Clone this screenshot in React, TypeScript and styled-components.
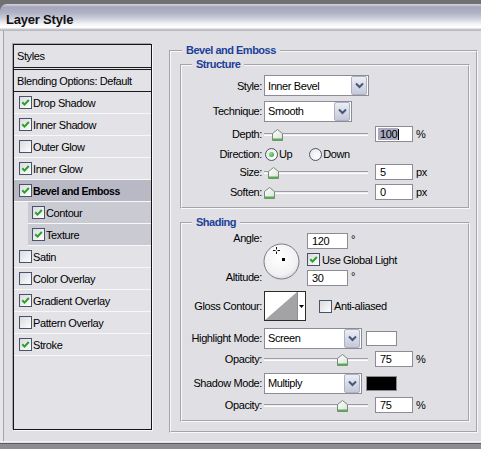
import React from "react";
import styled, { createGlobalStyle } from "styled-components";

const Global = createGlobalStyle`
  html, body { margin: 0; padding: 0; background: #e0e0e4; }
  * { box-sizing: border-box; }
`;

const FONT = `"Liberation Sans", Arial, sans-serif`;

const Window = styled.div`
  width: 481px;
  height: 449px;
  overflow: hidden;
  background: #707072;
  display: flex;
  flex-direction: column;
  font-family: ${FONT};
  font-size: 11px;
  letter-spacing: -0.4px;
  color: #000;
`;

const TopStrip = styled.div`
  height: 4px;
  flex: none;
`;

const TitleBar = styled.div`
  height: 27px;
  flex: none;
  border-top-left-radius: 7px;
  background: linear-gradient(
    to bottom,
    #d6d6e0 0px,
    #a5a6bc 3px,
    #b1b2c5 9px,
    #d0d1dd 15px,
    #f4f4f8 20px,
    #ffffff 23px,
    #fbfbfc 24px,
    #cbcbd1 25px,
    #b4b4bb 27px
  );
  padding: 8px 0 0 6px;
`;

const Title = styled.div`
  font-size: 13px;
  font-weight: bold;
  line-height: 15px;
  letter-spacing: -0.2px;
  color: #111;
`;

const Body = styled.div`
  height: 410px;
  flex: none;
  display: flex;
  align-items: flex-start;
  padding: 13px 0 0 13px;
  background: linear-gradient(to right, #e7e7eb 0 3px, #a3a3ab 3px 4px, #e0e0e4 4px);
`;

const BottomEdge = styled.div`
  height: 8px;
  flex: none;
  background: linear-gradient(to bottom, #f2f2f4 0 1px, #e0e0e4 1px 2px, #5e5e60 2px 3px, #8d8d90 3px);
`;

/* ---------- styles list ---------- */

const StylesList = styled.div`
  width: 139px;
  height: 386px;
  flex: none;
  background: #e3e3e7;
  border: 1px solid #161616;
  box-shadow: -1px -1px 0 #a6a6ae, 1px 1px 0 #fafafc;
  display: flex;
  flex-direction: column;
`;

const HeadRow = styled.div<{ $double?: boolean }>`
  height: ${(p) => (p.$double ? 25 : 22)}px;
  flex: none;
  display: flex;
  align-items: center;
  padding-left: 3px;
  border-bottom: ${(p) => (p.$double ? "3px double #1a1a1a" : "1px solid #1a1a1a")};
`;

type Kind = "plain" | "sel" | "sub";

const ListRow = styled.div<{ $kind: Kind }>`
  height: 22px;
  flex: none;
  display: flex;
  align-items: center;
  gap: 1px;
  padding-left: ${(p) => (p.$kind === "sub" ? 4 : 5)}px;
  margin-left: ${(p) => (p.$kind === "sub" ? 14 : 0)}px;
  background: ${(p) => (p.$kind === "sel" ? "#b9b9c6" : p.$kind === "sub" ? "#cacad3" : "transparent")};
  border-bottom: 1px solid #f7f7f9;
`;

const RowText = styled.span<{ $bold?: boolean }>`
  font-weight: ${(p) => (p.$bold ? "bold" : "normal")};
  font-size: ${(p) => (p.$bold ? "10.5px" : "11px")};
  letter-spacing: ${(p) => (p.$bold ? "-0.4px" : "-0.4px")};
  white-space: nowrap;
`;

const CheckBox = styled.span`
  width: 13px;
  height: 13px;
  flex: none;
  border: 1px solid #47536a;
  background: linear-gradient(135deg, #d9d9df 0%, #f0f0f3 60%, #fdfdfd 100%);
  display: inline-flex;
  align-items: center;
  justify-content: center;
`;

const Check = ({ on }: { on?: boolean }) => (
  <CheckBox>
    {on && (
      <svg width="9" height="9" viewBox="0 0 9 9">
        <path d="M1.3 4.3 L3.5 6.6 L7.8 2" stroke="#26a026" strokeWidth="2" fill="none" />
      </svg>
    )}
  </CheckBox>
);

/* ---------- group boxes ---------- */

const OuterSet = styled.fieldset`
  margin: 0 0 0 17px;
  padding: 1px 6px 9px 9px;
  width: 309px;
  min-width: 0;
  flex: none;
  border: 2px groove #f8f8fc;
`;

const InnerSet = styled.fieldset<{ $pt: number; $pb: number; $mt?: number }>`
  margin: ${(p) => p.$mt ?? 0}px 0 0 0;
  padding: ${(p) => p.$pt}px 0 ${(p) => p.$pb}px 0;
  width: 290px;
  min-width: 0;
  border: 2px groove #f8f8fc;
`;

const GroupLegend = styled.legend<{ $ml: number }>`
  margin-left: ${(p) => p.$ml}px;
  padding: 0 4px;
  height: 13px;
  line-height: 13px;
  font-weight: bold;
  font-size: 11px;
  letter-spacing: -0.5px;
  color: #1d3f99;
  background: #e0e0e4;
`;

const FormRow = styled.div<{ $h: number }>`
  height: ${(p) => p.$h}px;
  display: flex;
  align-items: center;
`;

const Label = styled.span`
  width: 82px;
  flex: none;
  text-align: right;
  padding-right: 2px;
  white-space: nowrap;
`;

const SelectBox = styled.div<{ $w: number }>`
  width: ${(p) => p.$w}px;
  height: 21px;
  flex: none;
  border: 1px solid #8c8c98;
  background: #fff;
  display: flex;
  align-items: center;
  justify-content: space-between;
  padding: 0 1px 0 3px;
`;

const DropButton = styled.span`
  width: 16px;
  height: 19px;
  border: 1px solid #aeb1c3;
  border-radius: 2px;
  background: linear-gradient(#eceef4, #c5c8d8);
  display: flex;
  align-items: center;
  justify-content: center;
`;

const Select = ({ w, value }: { w: number; value: string }) => (
  <SelectBox $w={w}>
    <span>{value}</span>
    <DropButton>
      <svg width="9" height="7" viewBox="0 0 9 7">
        <path d="M1 1.5 L4.5 5 L8 1.5" stroke="#44577c" strokeWidth="2" fill="none" />
      </svg>
    </DropButton>
  </SelectBox>
);

const SliderBox = styled.div`
  position: relative;
  width: 104px;
  height: 14px;
  flex: none;
  display: flex;
  align-items: center;
`;

const Track = styled.div`
  flex: 1;
  height: 3px;
  background: #ececee;
  border-top: 1px solid #9c9ca4;
  border-bottom: 1px solid #fdfdfd;
`;

const Thumb = styled.svg`
  position: absolute;
  top: 2px;
`;

const Slider = ({ pos }: { pos: number }) => (
  <SliderBox>
    <Track />
    <Thumb width="11" height="12" viewBox="0 0 11 12" style={{ left: pos }}>
      <defs>
        <linearGradient id="thumbg" x1="0" y1="0" x2="1" y2="1">
          <stop offset="0" stopColor="#ffffff" />
          <stop offset="1" stopColor="#d9e2d9" />
        </linearGradient>
      </defs>
      <path d="M0.5 11.5 V4.5 L5.5 0.5 L10.5 4.5 V11.5 Z" fill="url(#thumbg)" stroke="#7e877e" />
      <path d="M1 10.5 H10" stroke="#55ad55" strokeWidth="2" />
    </Thumb>
  </SliderBox>
);

const NumBox = styled.span<{ $ml?: number; $w?: number }>`
  width: ${(p) => p.$w ?? 38}px;
  height: 16px;
  flex: none;
  margin-left: ${(p) => p.$ml ?? 7}px;
  border: 1px solid #8c8c96;
  background: #fff;
  padding-left: 4px;
  display: flex;
  align-items: center;
`;

const Selected = styled.span`
  background: #a7aabf;
  margin-left: -2px;
  padding: 0 1px 0 2px;
`;

const Caret = styled.span`
  width: 1px;
  height: 11px;
  background: #000;
`;

const Unit = styled.span<{ $sup?: boolean }>`
  margin-left: 3px;
  align-self: ${(p) => (p.$sup ? "flex-start" : "center")};
`;

const RadioCircle = styled.span`
  width: 13px;
  height: 13px;
  flex: none;
  border-radius: 50%;
  border: 1px solid #4a566b;
  background: radial-gradient(circle at 70% 70%, #ffffff, #e4e4e8);
  display: inline-flex;
  align-items: center;
  justify-content: center;
`;

const RadioDot = styled.span`
  width: 5px;
  height: 5px;
  border-radius: 50%;
  background: radial-gradient(circle at 35% 35%, #8fe08f, #24a024);
`;

const RadioItem = styled.span<{ $ml?: number }>`
  display: flex;
  align-items: center;
  gap: 1px;
  margin-left: ${(p) => p.$ml ?? 0}px;
`;

const Radio = ({ on, label, ml }: { on?: boolean; label: string; ml?: number }) => (
  <RadioItem $ml={ml}>
    <RadioCircle>{on && <RadioDot />}</RadioCircle>
    <span>{label}</span>
  </RadioItem>
);

const CheckItem = styled.span<{ $ml?: number }>`
  display: flex;
  align-items: center;
  gap: 2px;
  margin-left: ${(p) => p.$ml ?? 0}px;
  white-space: nowrap;
`;

/* ---------- shading specific ---------- */

const AngleBlock = styled.div`
  height: 54px;
  display: flex;
  align-items: flex-start;
`;

const LabelStack = styled.div`
  width: 82px;
  height: 54px;
  flex: none;
  display: flex;
  flex-direction: column;
  justify-content: space-between;
  text-align: right;
  padding: 0 2px 1px 0;
  line-height: 14px;
`;

const Dial = styled.svg`
  flex: none;
  margin: 12px 0 0 -1px;
`;

const AngleCol = styled.div`
  margin-left: 7px;
  display: flex;
  flex-direction: column;
  gap: 4px;
  padding-top: 2px;
`;

const InlineRow = styled.div`
  display: flex;
  align-items: center;
  height: 16px;
`;

const CheckLine = styled.div`
  display: flex;
  align-items: center;
  height: 13px;
`;

const ContourBox = styled.div`
  width: 42px;
  height: 30px;
  flex: none;
  border: 1px solid #2c2c2c;
  background: #fff;
  display: flex;
`;

const ContourArrow = styled.span`
  flex: 1;
  display: flex;
  align-items: center;
  justify-content: center;
  border-left: 1px solid #8d8d95;
`;

const Swatch = styled.span<{ $color: string }>`
  width: 31px;
  height: 15px;
  flex: none;
  margin-left: 4px;
  border: 1px solid #8a8a93;
  background: ${(p) => p.$color};
`;

const effects: { label: string; on: boolean; kind: Kind }[] = [
  { label: "Drop Shadow", on: true, kind: "plain" },
  { label: "Inner Shadow", on: true, kind: "plain" },
  { label: "Outer Glow", on: false, kind: "plain" },
  { label: "Inner Glow", on: true, kind: "plain" },
  { label: "Bevel and Emboss", on: true, kind: "sel" },
  { label: "Contour", on: true, kind: "sub" },
  { label: "Texture", on: true, kind: "sub" },
  { label: "Satin", on: false, kind: "plain" },
  { label: "Color Overlay", on: false, kind: "plain" },
  { label: "Gradient Overlay", on: true, kind: "plain" },
  { label: "Pattern Overlay", on: false, kind: "plain" },
  { label: "Stroke", on: true, kind: "plain" },
];

const SLIDER_RANGE = 93;

export default function App() {
  return (
    <>
      <Global />
      <Window>
        <TopStrip />
        <TitleBar>
          <Title>Layer Style</Title>
        </TitleBar>
        <Body>
          <StylesList>
            <HeadRow $double>Styles</HeadRow>
            <HeadRow>Blending Options: Default</HeadRow>
            {effects.map((e) => (
              <ListRow key={e.label} $kind={e.kind}>
                <Check on={e.on} />
                <RowText $bold={e.kind === "sel"}>{e.label}</RowText>
              </ListRow>
            ))}
          </StylesList>

          <OuterSet>
            <GroupLegend $ml={2}>Bevel and Emboss</GroupLegend>
            <InnerSet $pt={2} $pb={3}>
              <GroupLegend $ml={10}>Structure</GroupLegend>
              <FormRow $h={25}>
                <Label>Style:</Label>
                <Select w={105} value="Inner Bevel" />
              </FormRow>
              <FormRow $h={26}>
                <Label>Technique:</Label>
                <Select w={88} value="Smooth" />
              </FormRow>
              <FormRow $h={20}>
                <Label>Depth:</Label>
                <Slider pos={Math.round(0.085 * SLIDER_RANGE)} />
                <NumBox>
                  <Selected>100</Selected>
                  <Caret />
                </NumBox>
                <Unit>%</Unit>
              </FormRow>
              <FormRow $h={20}>
                <Label>Direction:</Label>
                <Radio on label="Up" ml={1} />
                <Radio label="Down" ml={17} />
              </FormRow>
              <FormRow $h={16}>
                <Label>Size:</Label>
                <Slider pos={Math.round(0.045 * SLIDER_RANGE)} />
                <NumBox>5</NumBox>
                <Unit>px</Unit>
              </FormRow>
              <FormRow $h={24}>
                <Label>Soften:</Label>
                <Slider pos={0} />
                <NumBox>0</NumBox>
                <Unit>px</Unit>
              </FormRow>
            </InnerSet>

            <InnerSet $pt={2} $pb={7} $mt={7}>
              <GroupLegend $ml={10}>Shading</GroupLegend>
              <AngleBlock>
                <LabelStack>
                  <span>Angle:</span>
                  <span>Altitude:</span>
                </LabelStack>
                <Dial width="37" height="37" viewBox="0 0 37 37">
                  <defs>
                    <radialGradient id="dialg" cx="45%" cy="40%" r="65%">
                      <stop offset="0" stopColor="#ffffff" />
                      <stop offset="0.75" stopColor="#f1f1f3" />
                      <stop offset="1" stopColor="#d4d4da" />
                    </radialGradient>
                  </defs>
                  <circle cx="18.5" cy="18.5" r="17.5" fill="url(#dialg)" stroke="#7a7a84" />
                  <path
                    d="M13.5 4 V6.5 M13.5 8.5 V11 M10 7.5 H12.5 M14.5 7.5 H17"
                    stroke="#111"
                    strokeWidth="1"
                  />
                  <rect x="19" y="15" width="3" height="3" fill="#000" />
                </Dial>
                <AngleCol>
                  <InlineRow>
                    <NumBox $ml={0} $w={41}>120</NumBox>
                    <Unit $sup>°</Unit>
                  </InlineRow>
                  <CheckLine>
                    <CheckItem>
                      <Check on />
                      <span>Use Global Light</span>
                    </CheckItem>
                  </CheckLine>
                  <InlineRow>
                    <NumBox $ml={0} $w={41}>30</NumBox>
                    <Unit $sup>°</Unit>
                  </InlineRow>
                </AngleCol>
              </AngleBlock>
              <FormRow $h={42}>
                <Label>Gloss Contour:</Label>
                <ContourBox>
                  <svg width="32" height="28" viewBox="0 0 32 28">
                    <rect x="0" y="0" width="32" height="28" fill="#fff" />
                    <path d="M0 28 L32 0 L32 28 Z" fill="#a3a3a6" />
                  </svg>
                  <ContourArrow>
                    <svg width="5" height="3" viewBox="0 0 5 3">
                      <path d="M0 0 H5 L2.5 3 Z" fill="#000" />
                    </svg>
                  </ContourArrow>
                </ContourBox>
                <CheckItem $ml={13}>
                  <Check />
                  <span>Anti-aliased</span>
                </CheckItem>
              </FormRow>
              <FormRow $h={22}>
                <Label>Highlight Mode:</Label>
                <Select w={98} value="Screen" />
                <Swatch $color="#ffffff" />
              </FormRow>
              <FormRow $h={20}>
                <Label>Opacity:</Label>
                <Slider pos={Math.round(0.79 * SLIDER_RANGE)} />
                <NumBox>75</NumBox>
                <Unit>%</Unit>
              </FormRow>
              <FormRow $h={28}>
                <Label>Shadow Mode:</Label>
                <Select w={98} value="Multiply" />
                <Swatch $color="#000000" />
              </FormRow>
              <FormRow $h={16}>
                <Label>Opacity:</Label>
                <Slider pos={Math.round(0.79 * SLIDER_RANGE)} />
                <NumBox>75</NumBox>
                <Unit>%</Unit>
              </FormRow>
            </InnerSet>
          </OuterSet>
        </Body>
        <BottomEdge />
      </Window>
    </>
  );
}
